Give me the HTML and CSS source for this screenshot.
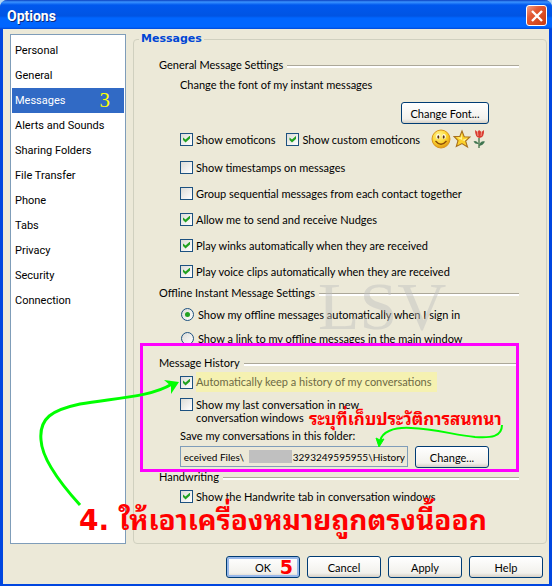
FILE: index.html
```html
<!DOCTYPE html>
<html lang="en">
<head>
    <meta charset="UTF-8">
    <meta name="viewport" content="width=device-width, initial-scale=1.0">
    <title>Options</title>
    <link rel="stylesheet" href="styles.css">
</head>
<body>
    <div class="window">
        <header class="titlebar">
            <h1>Options</h1>
            <button type="button" class="close" aria-label="Close">
                <svg width="12" height="12" viewBox="0 0 12 12"><path d="M1 1L11 11M11 1L1 11" stroke="#fff" stroke-width="2.4"/></svg>
            </button>
        </header>

        <form class="content">
            <div class="panels">
                <nav class="sidebar">
                    <a href="#">Personal</a>
                    <a href="#">General</a>
                    <a href="#" class="active">Messages <span class="step-3">3</span></a>
                    <a href="#">Alerts and Sounds</a>
                    <a href="#">Sharing Folders</a>
                    <a href="#">File Transfer</a>
                    <a href="#">Phone</a>
                    <a href="#">Tabs</a>
                    <a href="#">Privacy</a>
                    <a href="#">Security</a>
                    <a href="#">Connection</a>
                </nav>

                <fieldset class="messages">
                    <legend>Messages</legend>

                    <section class="general">
                        <h2>General Message Settings</h2>
                        <p class="font-text">Change the font of my instant messages</p>
                        <div class="font-row"><button type="button" class="btn font-btn">Change Font...</button></div>
                        <div class="row emoticons">
                            <label><input type="checkbox" checked>Show emoticons</label>
                            <label><input type="checkbox" checked>Show custom emoticons</label>
                            <span class="icons">
                                <svg width="20" height="20" viewBox="0 0 20 20">
                                    <defs><radialGradient id="face" cx="40%" cy="30%" r="70%"><stop offset="0" stop-color="#fff79a"/><stop offset=".6" stop-color="#fcd530"/><stop offset="1" stop-color="#e39a12"/></radialGradient></defs>
                                    <circle cx="10" cy="10" r="9" fill="url(#face)" stroke="#d9951c"/>
                                    <ellipse cx="7" cy="7.500" rx="1.800" ry="2.600" fill="#fff"/><ellipse cx="13" cy="7.500" rx="1.800" ry="2.600" fill="#fff"/>
                                    <ellipse cx="7.300" cy="8" rx="1" ry="1.700" fill="#5c3205"/><ellipse cx="12.700" cy="8" rx="1" ry="1.700" fill="#5c3205"/>
                                    <path d="M4.500 12Q10 18.500 15.500 12" fill="none" stroke="#8a4a08" stroke-width="1.300"/>
                                </svg>
                                <svg width="18" height="20" viewBox="0 0 18 20">
                                    <path d="M9 2L11.200 7.800L17 8L12.600 12L14.500 18L9 14.600L3.300 17.500L5 11.600L1 7.500L6.800 7.500Z" fill="#fcd22c" stroke="#a8701c" stroke-width="1.100"/>
                                    <path d="M9 4.500L9 11L4 8.600L8 8.500ZM9 11L14.500 9.200L11.500 12Z" fill="#fff39a"/>
                                </svg>
                                <svg width="13" height="20" viewBox="0 0 13 20">
                                    <path d="M6 9L6 19" stroke="#4c7a50" stroke-width="1.400"/>
                                    <path d="M6 15Q3 10.500 .500 12.500Q2 15.500 6 15ZM6 17Q7 11.500 12 12.500Q10 16.500 6 17Z" fill="#3f7550"/>
                                    <path d="M2 1L4.500 3L6 1L8.500 3L11 1Q11.500 8.500 6.500 9Q2 8.500 2 1Z" fill="#d93a30"/>
                                    <path d="M4.500 3L5 7M8.500 3L8 7" stroke="#f29a86"/>
                                </svg>
                            </span>
                        </div>
                        <div class="row"><label><input type="checkbox">Show timestamps on messages</label></div>
                        <div class="row"><label><input type="checkbox">Group sequential messages from each contact together</label></div>
                        <div class="row"><label><input type="checkbox" checked>Allow me to send and receive Nudges</label></div>
                        <div class="row"><label><input type="checkbox" checked>Play winks automatically when they are received</label></div>
                        <div class="row"><label><input type="checkbox" checked>Play voice clips automatically when they are received</label></div>
                    </section>

                    <section class="offline">
                        <h2>Offline Instant Message Settings</h2>
                        <div class="row radio-row"><label><input type="radio" name="offline" checked>Show my offline messages automatically when I sign in</label></div>
                        <div class="row radio-row"><label><input type="radio" name="offline">Show a link to my offline messages in the main window</label></div>
                        <span class="watermark">LSV</span>
                    </section>

                    <section class="history">
                        <h2>Message History</h2>
                        <div class="row short-row"><label><input type="checkbox" checked><span class="marked">Automatically keep a history of my conversations</span></label></div>
                        <div class="row last-row"><label><input type="checkbox"><span>Show my last conversation in new<br>conversation windows</span></label></div>
                        <label class="folder-label" for="folder">Save my conversations in this folder:</label>
                        <div class="folder-row">
                            <div class="folder">
                                <input type="text" id="folder" value="eceived Files\&nbsp;&nbsp;&nbsp;&nbsp;&nbsp;&nbsp;&nbsp;&nbsp;&nbsp;&nbsp;&nbsp;&nbsp;&nbsp;&nbsp;&nbsp;&nbsp;&nbsp;&nbsp;&nbsp;3293249595955\History" readonly>
                                <span class="mask"></span>
                            </div>
                            <button type="button" class="btn">Change...</button>
                        </div>
                        <div class="frame"></div>
                        <span class="note note-folder" lang="th">ระบุที่เก็บประวัติการสนทนา</span>
                        <svg class="arrow arrow-folder" width="130" height="26" viewBox="0 0 130 26">
                            <path d="M127 1C127 13 116 14 100 13C80 11 60 5 36 4C18 3 7 8 5 17" fill="none" stroke="#0f0" stroke-width="2"/>
                            <path d="M1 14L4 23L9 15L5 16Z" fill="#0f0" stroke="#0f0"/>
                        </svg>
                        <svg class="arrow arrow-history" width="142" height="128" viewBox="0 0 142 128">
                            <path d="M42 125C22 103 4 79 3 60C1 38 14 30 42 24C78 18 113 17 134 4" fill="none" stroke="#0f0" stroke-width="3"/>
                            <path d="M126 0L141 2L133 14L133 6Z" fill="#0f0"/>
                        </svg>
                    </section>

                    <section class="handwriting">
                        <h2>Handwriting</h2>
                        <div class="row short-row"><label><input type="checkbox" checked>Show the Handwrite tab in conversation windows</label></div>
                        <span class="note note-uncheck" lang="th">4. ให้เอาเครื่องหมายถูกตรงนี้ออก</span>
                    </section>
                </fieldset>
            </div>

            <footer class="buttons">
                <button type="submit" class="btn default">OK<span class="step-5">5</span></button>
                <button type="button" class="btn">Cancel</button>
                <button type="button" class="btn">Apply</button>
                <button type="button" class="btn">Help</button>
            </footer>
        </form>
    </div>
</body>
</html>
```
FILE: styles.css
```css
* {
    box-sizing: border-box;
}
body {
    margin: 0;
    background: #b4d6f2;
    font-family: Lato, sans-serif;
    font-size: 11px;
    line-height: 13px;
    color: #000;
}
h1, h2, p {
    margin: 0;
}
button, input {
    font: inherit;
    color: inherit;
}

/* window */
.window {
    display: flex;
    flex-direction: column;
    min-height: 100vh;
    border: 3px solid #0046e0;
    border-top: 0;
    border-radius: 8px 8px 0 0;
    background: #ece9d8;
}
.titlebar {
    display: flex;
    justify-content: space-between;
    align-items: center;
    height: 29px;
    margin: 0 -3px;
    padding: 2px 5px 0 7px;
    border-radius: 7px 7px 0 0;
    background: linear-gradient(#0a3fc0 0, #3a93ff 2px, #0058ee 5px, #0054e3 16px, #0066ff 18px, #0066ff 27px, #0048d8 29px);
}
h1 {
    font-family: Roboto, sans-serif;
    font-size: 14px;
    line-height: 18px;
    color: #fff;
    text-shadow: 1px 1px #0a2a80;
}
.close {
    display: flex;
    align-items: center;
    justify-content: center;
    width: 21px;
    height: 21px;
    padding: 0;
    border: 1px solid #fff;
    border-radius: 3px;
    background: linear-gradient(135deg, #f0a088, #e35a34 35%, #c83a10);
}
.content {
    display: flex;
    flex: 1;
    flex-direction: column;
    padding: 3px 2px 6px 7px;
}
.panels {
    display: flex;
    flex: 1;
    gap: 7px;
}

/* category list */
.sidebar {
    width: 116px;
    margin-top: 2px;
    padding: 3px 1px;
    border: 1px solid #7f9db9;
    background: #fff;
    font-family: Roboto, sans-serif;
}
.sidebar a {
    display: flex;
    justify-content: space-between;
    padding: 0 14px 0 3px;
    color: #000;
    line-height: 25px;
    text-decoration: none;
}
.sidebar .active {
    background: #316ac5;
    color: #fff;
}
.step-3 {
    font-family: "Liberation Serif", serif;
    font-size: 21px;
    color: #ff0;
}

/* settings */
.messages {
    flex: 1;
    min-width: 0;
    margin: 0;
    padding: 10px 27px 37px 25px;
    border: 1px solid #d0d0bf;
    border-radius: 4px;
}
legend {
    margin-left: -20px;
    padding: 0 2px;
    font-family: "DejaVu Sans", sans-serif;
    font-size: 11px;
    font-weight: bold;
    line-height: 14px;
    color: #0046d5;
}
section {
    position: relative;
}
h2 {
    display: flex;
    align-items: center;
    gap: 4px;
    height: 18px;
    font-size: 11px;
    font-weight: normal;
    line-height: 18px;
}
h2::after {
    content: "";
    flex: 1;
    height: 2px;
    margin-top: 2px;
    border-top: 1px solid #aca899;
    background: #fff;
}
.font-text {
    padding: 4px 0 0 21px;
}
.font-row {
    display: flex;
    justify-content: flex-end;
    padding: 11px 30px 0 0;
}
.row {
    display: flex;
    align-items: center;
    height: 26px;
    padding-left: 21px;
    white-space: nowrap;
}
.row label {
    display: flex;
    align-items: center;
    gap: 3px;
}
.emoticons {
    height: 30px;
    gap: 11px;
}
.icons {
    display: flex;
    gap: 2px;
}
.radio-row {
    height: 24px;
}
.short-row {
    height: 20px;
}
input[type="checkbox"],
input[type="radio"] {
    flex: none;
    appearance: none;
    width: 13px;
    height: 13px;
    margin: 0;
    border: 1px solid #1c5180;
    background: linear-gradient(135deg, #dcdcd7, #fff);
}
input[type="radio"] {
    margin: 0 1px;
    border-radius: 50%;
}
input[type="checkbox"]:checked::before {
    content: "";
    display: block;
    width: 7px;
    height: 7px;
    margin: 2px;
    background: #21a121;
    clip-path: polygon(0 29%, 0 64%, 36% 100%, 100% 43%, 100% 0, 36% 58%);
}
input[type="radio"]:checked::before {
    content: "";
    display: block;
    width: 5px;
    height: 5px;
    margin: 3px;
    border-radius: 50%;
    background: #21a121;
}
.watermark {
    position: absolute;
    top: -12px;
    left: 159px;
    font-family: "Liberation Serif", serif;
    font-size: 68px;
    line-height: 68px;
    color: rgba(190, 190, 190, 0.45);
}

/* message history */
.history {
    padding-top: 4px;
}
.marked {
    padding: 3px 5px 4px 0;
    background: #f5f1b1;
    color: #6d6a45;
}
.last-row {
    height: 37px;
}
.last-row label {
    align-items: flex-start;
}
.folder-label {
    display: block;
    padding-left: 21px;
}
.folder-row {
    display: flex;
    gap: 7px;
    padding: 4px 30px 0 21px;
}
.folder {
    position: relative;
    flex: 1;
}
.folder input {
    display: block;
    width: 100%;
    height: 21px;
    padding: 0 2px;
    border: 1px solid #7f9db9;
    background: #ece9d8;
    font-size: 10px;
    text-align: right;
}
.mask {
    position: absolute;
    top: 4px;
    left: 69px;
    width: 43px;
    height: 13px;
    background: #c0c0c0;
}
.frame {
    position: absolute;
    top: -7px;
    left: -19px;
    right: 0;
    bottom: -4px;
    border: 3px solid #f0f;
    pointer-events: none;
}

/* buttons */
.btn {
    width: 74px;
    height: 22px;
    padding: 0;
    border: 1px solid #003c74;
    border-radius: 3px;
    background: linear-gradient(#fff, #f2f1ec 80%, #d6d0c5);
    white-space: nowrap;
}
.font-btn {
    width: 88px;
}
.buttons {
    display: flex;
    justify-content: flex-end;
    gap: 7px;
    padding: 12px 4px 0 0;
}
.default {
    position: relative;
    box-shadow: inset 0 0 0 2px #98b8ea;
}
.step-5 {
    position: absolute;
    top: 1px;
    right: 6px;
    font-family: "DejaVu Sans", sans-serif;
    font-size: 19px;
    font-weight: bold;
    line-height: 18px;
    color: #f00;
}

/* tutorial notes */
.note {
    position: absolute;
    font-family: "DejaVu Sans", "Noto Sans Thai Looped", "Noto Sans Thai", sans-serif;
    font-weight: bold;
    color: #f00;
    white-space: nowrap;
}
.note-folder {
    top: 57px;
    left: 150px;
    font-size: 17px;
    line-height: 24px;
}
.note-uncheck {
    top: 32px;
    left: -80px;
    font-size: 28px;
    line-height: 42px;
}
.arrow {
    position: absolute;
    pointer-events: none;
}
.arrow-folder {
    top: 74px;
    left: 216px;
}
.arrow-history {
    top: 30px;
    left: -121px;
}
```
